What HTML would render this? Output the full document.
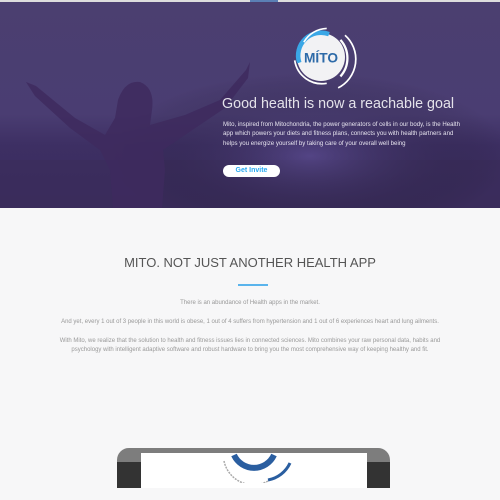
<!DOCTYPE html>
<html><head><style>
body{margin:0;width:500px;height:500px;overflow:hidden;background:#f7f7f8;font-family:"Liberation Sans",sans-serif;position:relative}
.hero{position:absolute;left:0;top:0;width:500px;height:208px;background:linear-gradient(180deg,#4b3f70 0%,#4a3d72 55%,#3d2f63 70%,#3a2c5c 100%);overflow:hidden}
.top{position:absolute;top:0;left:0;width:500px;height:2px;background:#ddd}
.hero h1{position:absolute;left:222px;top:96px;margin:0;font-weight:normal;font-size:14.3px;color:#e4e2ea;white-space:nowrap}
.hero p{position:absolute;left:223px;top:120px;width:242px;margin:0;font-size:6.1px;line-height:9.3px;color:#e6e3ee}
.btn{position:absolute;left:223px;top:165px;width:57px;height:12px;border-radius:6px;background:#fff;color:#29a9f0;font-weight:bold;font-size:7px;text-align:center;line-height:12px}
h2{position:absolute;top:255px;left:0;width:500px;text-align:center;margin:0;font-weight:normal;font-size:13px;color:#555}
.bar{position:absolute;left:238px;top:284px;width:30px;height:2px;background:#5ab4ec}
.t{position:absolute;left:0;width:500px;text-align:center;font-size:6px;color:#999;line-height:9px}
</style></head><body>
<div class="hero">
<svg width="500" height="208" style="position:absolute;left:0;top:0">
<defs><radialGradient id="g" cx="62%" cy="75%" r="40%"><stop offset="0" stop-color="#6a5aa8" stop-opacity=".5"/><stop offset="1" stop-color="#000" stop-opacity="0"/></radialGradient></defs>
<rect x="0" y="160" width="500" height="48" fill="#3a2c5a" opacity=".5"/>
<rect width="500" height="208" fill="url(#g)"/>
<path d="M26 82 L36 86 L75 118 L105 135 L115 118 L118 100 Q125 80 140 82 Q155 88 152 110 L150 125 L185 115 L220 100 L246 70 L250 62 L248 78 L225 108 L185 135 L163 150 L165 170 L162 208 L113 208 L110 170 L100 150 L70 128 L35 96 Z" fill="#3e2a5e" opacity=".85"/>
</svg>
<div class="top"></div>
<div style="position:absolute;left:250px;top:0;width:28px;height:2px;background:#5b7fb5"></div>
<svg width="80" height="80" style="position:absolute;left:281px;top:17px" viewBox="0 0 70 70">
<circle cx="35" cy="35" r="21" fill="#f2f2f4"/>
<path d="M16 40 A20 20 0 0 1 42 15" stroke="#3aa7e6" stroke-width="4" fill="none"/>
<path d="M20 22 A24 24 0 0 1 40 10" stroke="#fff" stroke-width="1.5" fill="none"/>
<path d="M52 20 A24 24 0 0 1 52 52" stroke="#fff" stroke-width="2" fill="none"/>
<path d="M56 16 A28 28 0 0 1 50 62" stroke="#fff" stroke-width="1.5" fill="none"/>
<path d="M12 38 A24 24 0 0 0 40 58" stroke="#fff" stroke-width="1.5" fill="none"/>
<text x="35" y="40" text-anchor="middle" font-family="Liberation Sans" font-weight="bold" font-size="12" fill="#2d6aa8">MÍTO</text>
</svg>
<h1>Good health is now a reachable goal</h1>
<p>Mito, inspired from Mitochondria, the power generators of cells in our body, is the Health app which powers your diets and fitness plans, connects you with health partners and helps you energize yourself by taking care of your overall well being</p>
<div class="btn">Get Invite</div>
</div>
<h2>MITO. NOT JUST ANOTHER HEALTH APP</h2>
<div class="bar"></div>
<div class="t" style="top:299px">There is an abundance of Health apps in the market.</div>
<div class="t" style="top:318px">And yet, every 1 out of 3 people in this world is obese, 1 out of 4 suffers from hypertension and 1 out of 6 experiences heart and lung ailments.</div>
<div class="t" style="top:337px;left:55px;width:390px">With Mito, we realize that the solution to health and fitness issues lies in connected sciences. Mito combines your raw personal data, habits and psychology with intelligent adaptive software and robust hardware to bring you the most comprehensive way of keeping healthy and fit.</div>
<div style="position:absolute;left:117px;top:448px;width:273px;height:40px;background:#7d7d7d;border-radius:12px 12px 0 0"></div>
<div style="position:absolute;left:117px;top:462px;width:24px;height:26px;background:#333"></div>
<div style="position:absolute;left:367px;top:462px;width:23px;height:26px;background:#333"></div>
<div style="position:absolute;left:141px;top:453px;width:226px;height:47px;background:#fff"></div>
<svg width="80" height="30" style="position:absolute;left:218px;top:453px"><path d="M16 2 A22 22 0 0 0 56 2" stroke="#2a5ea0" stroke-width="6" fill="none"/><path d="M6 8 A30 30 0 0 0 50 28" stroke="#aaa" stroke-width="1.5" fill="none" stroke-dasharray="2 1"/><path d="M50 27 A30 30 0 0 0 72 10" stroke="#2a5ea0" stroke-width="3" fill="none"/></svg>
<div style="position:absolute;left:0;top:488px;width:500px;height:12px;background:#f7f7f8"></div>
</body></html>
